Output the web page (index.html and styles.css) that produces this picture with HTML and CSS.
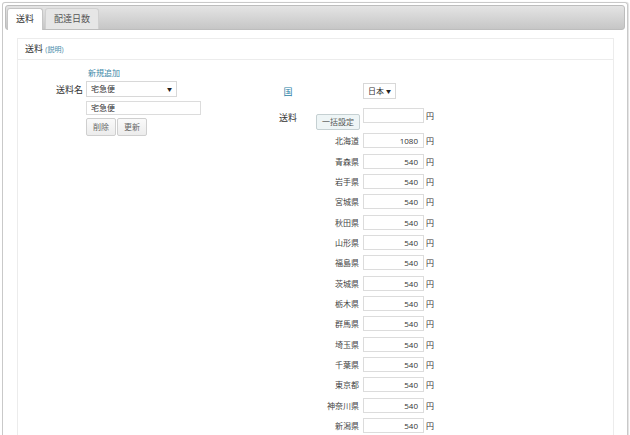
FILE: index.html
```html
<!DOCTYPE html>
<html lang="ja">
<head>
<meta charset="utf-8">
<title>送料</title>
<link rel="stylesheet" href="styles.css">
</head>
<body>
<div class="tabs">
  <ul class="tabbar">
    <li class="tab active">送料</li>
    <li class="tab">配達日数</li>
  </ul>
  <div class="panel">
    <div class="box">
      <div class="box-head">送料 <span class="note">(説明)</span></div>
      <div class="box-body">
        <div class="left">
          <div class="lrow first"><span class="lbl"></span><a class="link">新規追加</a></div>
          <div class="lrow"><span class="lbl">送料名</span><div class="fselect wide">宅急便<span class="arrow">▼</span></div></div>
          <div class="lrow"><span class="lbl"></span><div class="finput name">宅急便</div></div>
          <div class="lrow"><span class="lbl"></span><span class="btn">削除</span><span class="btn">更新</span></div>
        </div>
        <div class="right">
          <div class="rrow country"><span class="rlbl">国</span><div class="fselect small">日本<span class="arrow">▼</span></div></div>
          <div class="rrow bulk"><span class="rlbl">送料</span><span class="btn bulkbtn">一括設定</span><div class="finput num"></div><span class="yen">円</span></div>
          <div class="pref"><span class="plbl">北海道</span><div class="finput num">1080</div><span class="yen">円</span></div>
          <div class="pref"><span class="plbl">青森県</span><div class="finput num">540</div><span class="yen">円</span></div>
          <div class="pref"><span class="plbl">岩手県</span><div class="finput num">540</div><span class="yen">円</span></div>
          <div class="pref"><span class="plbl">宮城県</span><div class="finput num">540</div><span class="yen">円</span></div>
          <div class="pref"><span class="plbl">秋田県</span><div class="finput num">540</div><span class="yen">円</span></div>
          <div class="pref"><span class="plbl">山形県</span><div class="finput num">540</div><span class="yen">円</span></div>
          <div class="pref"><span class="plbl">福島県</span><div class="finput num">540</div><span class="yen">円</span></div>
          <div class="pref"><span class="plbl">茨城県</span><div class="finput num">540</div><span class="yen">円</span></div>
          <div class="pref"><span class="plbl">栃木県</span><div class="finput num">540</div><span class="yen">円</span></div>
          <div class="pref"><span class="plbl">群馬県</span><div class="finput num">540</div><span class="yen">円</span></div>
          <div class="pref"><span class="plbl">埼玉県</span><div class="finput num">540</div><span class="yen">円</span></div>
          <div class="pref"><span class="plbl">千葉県</span><div class="finput num">540</div><span class="yen">円</span></div>
          <div class="pref"><span class="plbl">東京都</span><div class="finput num">540</div><span class="yen">円</span></div>
          <div class="pref"><span class="plbl">神奈川県</span><div class="finput num">540</div><span class="yen">円</span></div>
          <div class="pref"><span class="plbl">新潟県</span><div class="finput num">540</div><span class="yen">円</span></div>
        </div>
      </div>
    </div>
  </div>
</div>
</body>
</html>
```

FILE: styles.css
```css
html, body {
  margin: 0;
  padding: 0;
  overflow: hidden;
  background: #fff;
}
body {
  font-family: "Open Sans", "Noto Sans CJK JP", sans-serif;
  font-size: 9px;
  color: #333;
  height: 435px;
}
.tabs {
  margin: 2px 2px 0 2px;
  border: 1px solid #c9c9c9;
  border-bottom: none;
  border-radius: 3px 3px 0 0;
  padding: 2px 2px 0 2px;
  height: 500px;
  box-shadow: 1px 0 1px rgba(0,0,0,0.12);
}
.tabbar {
  list-style: none;
  margin: 0;
  padding: 2px 0 0 1px;
  height: 21px;
  border: 1px solid #bdbdbd;
  border-radius: 3px;
  background: linear-gradient(#e4e4e4, #c6c6c6);
  display: flex;
  align-items: flex-start;
  gap: 2px;
}
.tab {
  height: 20px;
  line-height: 20px;
  padding: 0 8px;
  border: 1px solid #d0d0d0;
  border-bottom: none;
  border-radius: 3px 3px 0 0;
  background: #e6e6e6;
  color: #555;
  font-size: 9px;
}
.tab.active {
  height: 21px;
  background: #fff;
  border-color: #c5c5c5;
  color: #333;
  position: relative;
  z-index: 1;
}
.panel {
  padding: 8px 11px 0 12px;
  background: #fff;
}
.box {
  border: 1px solid #ececec;
  height: 460px;
}
.box-head {
  height: 20px;
  line-height: 20px;
  padding-left: 7px;
  border-bottom: 1px solid #ececec;
  font-size: 9px;
  color: #333;
}
.note {
  font-size: 7px;
  color: #4a8bab;
}
.box-body {
  display: flex;
}
.left {
  width: 250px;
  padding-top: 6px;
}
.lrow {
  display: flex;
  align-items: center;
  margin-top: 3px;
}
.lrow.first {
  margin-top: 0;
  height: 12px;
}
.lbl {
  width: 65px;
  margin-right: 3px;
  text-align: right;
  font-size: 9px;
  color: #333;
}
.link {
  color: #3d88a8;
  font-size: 8px;
  padding-left: 2px;
}
.fselect {
  box-sizing: border-box;
  height: 16px;
  border: 1px solid #d8d8d8;
  background: #fff;
  font-size: 8px;
  line-height: 14px;
  padding-left: 4px;
  display: flex;
  justify-content: space-between;
  color: #333;
}
.fselect.wide {
  width: 91px;
}
.fselect.small {
  width: 33px;
}
.arrow {
  font-size: 5px;
  padding-right: 4px;
  color: #222;
}
.finput {
  box-sizing: border-box;
  border: 1px solid #dcdcdc;
  background: #fff;
  font-size: 8px;
  color: #333;
}
.finput.name {
  width: 115px;
  height: 14px;
  line-height: 12px;
  padding-left: 4px;
  margin-top: 1px;
}
.btn {
  box-sizing: border-box;
  display: inline-block;
  height: 18px;
  line-height: 16px;
  padding: 0 6px;
  border: 1px solid #cfcfcf;
  border-radius: 2px;
  background: linear-gradient(#fafafa, #ececec);
  color: #666;
  font-size: 8px;
  margin-right: 1px;
}
.right {
  padding-top: 23px;
  width: 200px;
}
.rrow {
  display: flex;
  align-items: flex-start;
}
.rlbl {
  width: 40px;
  text-align: center;
  font-size: 9px;
  color: #333;
}
.country {
  height: 16px;
  align-items: center;
}
.country .rlbl {
  color: #2a7fa6;
}
.country .fselect {
  margin-left: 55px;
}
.bulk {
  margin-top: 9px;
  height: 22.67px;
}
.bulk .rlbl {
  margin-top: 3px;
}
.bulkbtn {
  margin-left: 8px;
  margin-top: 6px;
  width: 44px;
  height: 16px;
  line-height: 14px;
  padding: 0;
  text-align: center;
  background: #eef5f6;
  border-color: #c5d0d2;
  color: #555;
  margin-right: 0;
}
.bulk .finput {
  margin-left: 3px;
  height: 16px;
}
.bulk .yen {
  margin-top: 2px;
}
.pref {
  display: flex;
  align-items: center;
  height: 20.33px;
}
.plbl {
  width: 95px;
  padding-right: 4px;
  box-sizing: border-box;
  text-align: right;
  font-size: 8px;
  color: #444;
}
.finput.num {
  width: 61px;
  height: 15px;
  line-height: 13px;
  text-align: right;
  padding-right: 5px;
}
.yen {
  margin-left: 2px;
  font-size: 8px;
  color: #333;
}
```
